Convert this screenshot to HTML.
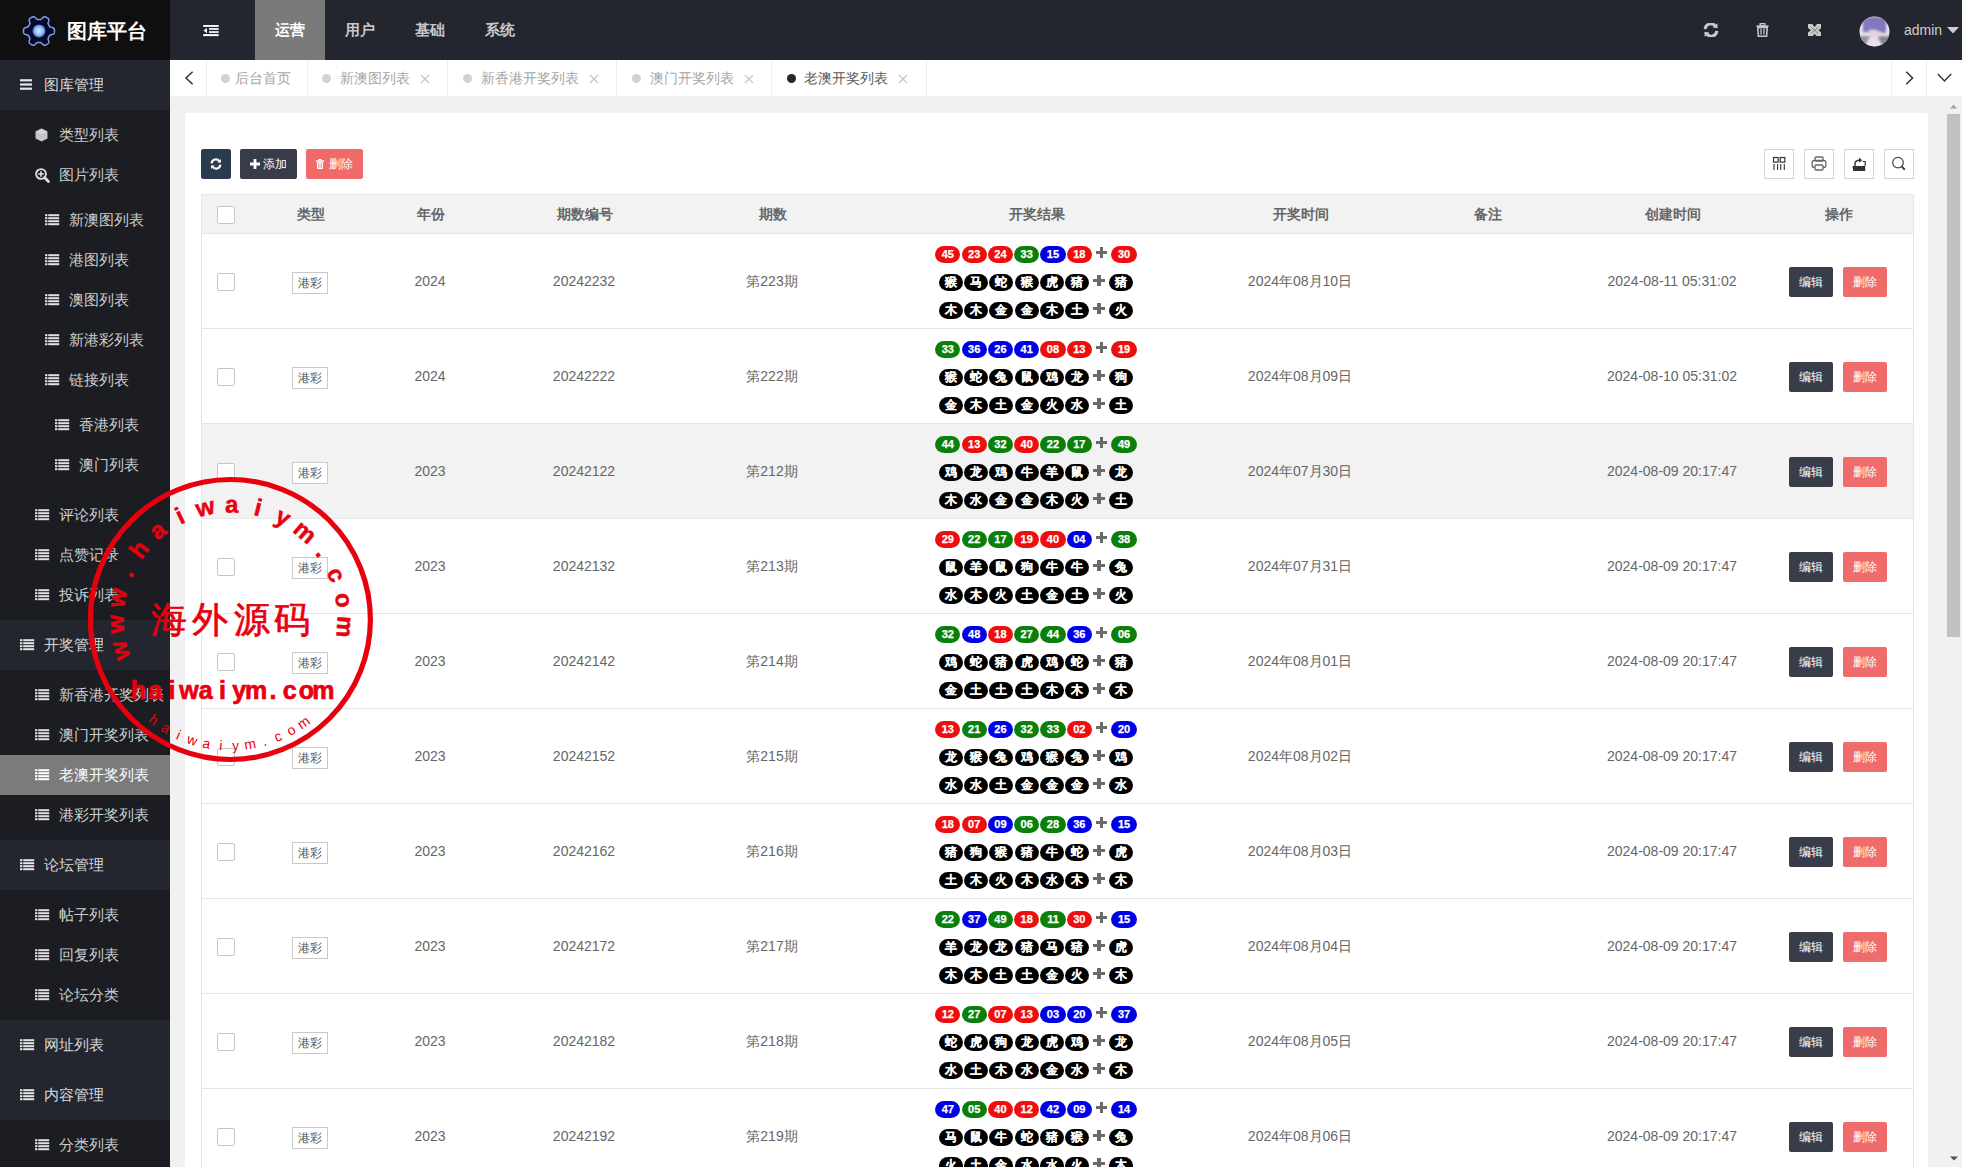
<!DOCTYPE html>
<html><head><meta charset="utf-8"><style>*{box-sizing:border-box;margin:0;padding:0}
html,body{width:1962px;height:1167px;overflow:hidden}
body{position:relative;background:#f1f1f1;font-family:"Liberation Sans",sans-serif;font-size:14px;color:#666}
.abs{position:absolute}
#top{position:absolute;left:0;top:0;width:1962px;height:60px;background:#23262e}
#logo{position:absolute;left:0;top:0;width:170px;height:60px;background:#0f0f10}
#logo .t{position:absolute;left:67px;top:19px;font-size:20px;line-height:24px;font-weight:bold;color:#fff;white-space:nowrap}
.nav{position:absolute;top:0;height:60px;width:70px;line-height:60px;text-align:center;font-size:15px;font-weight:bold;color:#c8c8c8}
.nav.on{background:#7a7a7a;color:#fff}
#admin{position:absolute;left:1904px;top:22px;font-size:14px;line-height:16px;color:#cfcfcf}
#tabs{position:absolute;left:170px;top:60px;width:1792px;height:36px;background:#fff}
.tab{position:absolute;top:0;height:36px;border-left:1px solid #f0f0f0;line-height:36px;font-size:14px;color:#999;white-space:nowrap}
.tab .dot{position:absolute;top:14px;width:8px;height:8px;border-radius:50%;background:#d2d2d2}
.tab .x{position:absolute;top:0;font-size:14px;color:#bbb}
#side{position:absolute;left:0;top:60px;width:170px;height:1107px;background:#1b1d22}
.grp{position:absolute;left:0;width:170px;height:50px;background:#23262e}
.it{position:absolute;left:0;width:170px;height:40px;line-height:40px;font-size:15px;color:#d0d0d0;white-space:nowrap}
.grp .lb{position:absolute;left:44px;top:0;line-height:50px;font-size:15px;color:#d6d6d6;white-space:nowrap}
.it.on{background:#7b7b7b;color:#fff}
.it .lb{position:absolute;top:0}
.ic{position:absolute}
#main{position:absolute;left:170px;top:96px;width:1792px;height:1071px;background:#f1f1f1;overflow:hidden}
.card{position:absolute;left:185px;top:113px;width:1743px;height:1100px;background:#fff;border-radius:2px}
.sb{position:absolute;left:1945px;top:96px;width:17px;height:1071px;background:#f1f1f1}
.sb .th{position:absolute;left:2px;top:18px;width:13px;height:523px;background:#c1c1c1}
.tb{position:absolute;top:149px;height:30px;border-radius:2px;color:#fff;font-size:12px;line-height:30px;white-space:nowrap}
.tool{position:absolute;top:149px;width:30px;height:30px;border:1px solid #d2d2d2;background:#fff}
.tool svg{position:absolute;left:0;top:0}
.thead{position:absolute;left:201px;top:194px;width:1713px;height:40px;background:#f2f2f2;border:1px solid #e6e6e6}
.th{position:absolute;top:0;width:200px;text-align:center;line-height:38px;font-weight:bold;color:#666;font-size:14px}
.cb{position:absolute;width:18px;height:18px;border:1px solid #c6c6c6;border-radius:2px;background:#fff}
.rows{position:absolute;left:0;top:0}
.row{position:absolute;left:201px;width:1713px;height:95px;background:#fff;border-bottom:1px solid #e6e6e6}
.row.hov{background:#f2f2f2}
.row .cb{top:39px}
.badge{position:absolute;top:38px;width:36px;height:22px;border:1px solid #c9c9c9;background:#fff;font-size:12px;line-height:20px;text-align:center;color:#555}
.tx{position:absolute;top:37px;width:200px;text-align:center;line-height:20px;font-size:14px;color:#666;white-space:nowrap}
.res{position:absolute;left:735px;top:0;width:200px;height:95px}
.ln{position:absolute;left:-49.5px;width:300px;display:flex;justify-content:center;align-items:flex-start;height:17px}
.l1{top:12px}.l2{top:40px}.l3{top:68px}
.bl,.bk{display:block;flex:none;height:17px;line-height:17px;border-radius:9px/8.5px;color:#fff;font-weight:bold;text-align:center;font-style:normal}
.bl{width:25.2px;margin-right:1.1px;font-size:11px;-webkit-text-stroke:0.25px #fff}
.bk{width:24px;margin-right:1.2px;background:#000;font-size:12px;-webkit-text-stroke:0.15px #fff}
.bl.r{background:#f00d0d}.bl.g{background:#0a800a}.bl.b{background:#0000e6}
.pl{display:block;flex:none;position:relative;width:18.5px;height:17px;font-size:0}.pl::before,.pl::after{content:'';position:absolute;background:#6a6a6a}.pl::before{left:3.1px;top:5.3px;width:11.4px;height:2.9px}.pl::after{left:7.1px;top:1.2px;width:3.3px;height:10.8px}
.btn{position:absolute;top:33px;width:44px;height:30px;line-height:30px;border-radius:2px;color:#fff;font-size:12px;text-align:center}
.btn.ed{left:1588px;background:#393d49}
.btn.dl{left:1642px;background:#f06b6b}
</style></head>
<body>
<div id="main"></div>
<div class="card"></div>
<div class="tb" style="left:201px;width:30px;background:#2b3c50"><svg class="abs" style="left:9px;top:9px" width="12" height="12" viewBox="0 0 16 14"><path d="M2.2 6.2 A5.6 5.6 0 0 1 12.4 3.3" fill="none" stroke="#fff" stroke-width="2.8"/><path d="M9.6 4.6 L14.6 5.2 L14.4 0.2Z" fill="#fff"/><path d="M13.8 7.8 A5.6 5.6 0 0 1 3.6 10.7" fill="none" stroke="#fff" stroke-width="2.8"/><path d="M6.4 9.4 L1.4 8.8 L1.6 13.8Z" fill="#fff"/></svg></div>
<div class="tb" style="left:240px;width:57px;background:#383c48"><svg class="abs" style="left:10px;top:10px" width="10" height="10" viewBox="0 0 10 10"><path d="M3.6 0H6.4V3.6H10V6.4H6.4V10H3.6V6.4H0V3.6H3.6Z" fill="#fff"/></svg><span class="abs" style="left:23px;top:0">添加</span></div>
<div class="tb" style="left:306px;width:57px;background:#f06a6a"><svg class="abs" style="left:10px;top:10px" width="8" height="10" viewBox="0 0 8 10"><rect x="0" y="1.2" width="8" height="1.4" fill="#fff"/><rect x="2.6" y="0" width="2.8" height="1.6" fill="#fff"/><path d="M0.8 3H7.2L6.8 10H1.2Z" fill="#fff"/><rect x="2.4" y="4" width="0.9" height="5" fill="#f06a6a"/><rect x="4.7" y="4" width="0.9" height="5" fill="#f06a6a"/></svg><span class="abs" style="left:23px;top:0">删除</span></div>
<div class="tool" style="left:1764px"><svg width="28" height="28" viewBox="0 0 28 28"><rect x="8.5" y="7.5" width="4.6" height="4.6" fill="none" stroke="#333" stroke-width="1.2"/><rect x="15.2" y="7.5" width="4.6" height="4.6" fill="none" stroke="#333" stroke-width="1.2"/><path d="M9 14V20M12.6 14V20M15.7 14V20M19.3 14V20" stroke="#333" stroke-width="1.1"/></svg></div>
<div class="tool" style="left:1804px"><svg width="28" height="28" viewBox="0 0 28 28"><rect x="10" y="7" width="8" height="4" rx="1" fill="none" stroke="#666" stroke-width="1.3"/><rect x="7.2" y="10.5" width="13.6" height="7" rx="2" fill="none" stroke="#666" stroke-width="1.3"/><rect x="10" y="15" width="8" height="5" rx="1" fill="#fff" stroke="#666" stroke-width="1.3"/></svg></div>
<div class="tool" style="left:1844px"><svg width="28" height="28" viewBox="0 0 28 28"><path d="M7.5 16H20.2V21H8.2Z" fill="#333"/><path d="M17.5 11.5H20.2V16" fill="none" stroke="#333" stroke-width="1.2"/><path d="M10 16.2V14Q10 10.2 14.6 10.2" fill="none" stroke="#333" stroke-width="1.4"/><path d="M14 7.6L17.2 10.2L14 12.8Z" fill="#333"/></svg></div>
<div class="tool" style="left:1884px"><svg width="28" height="28" viewBox="0 0 28 28"><circle cx="13" cy="12.6" r="5.3" fill="none" stroke="#444" stroke-width="1.2"/><path d="M16.6 16.4L19.8 19.8" stroke="#444" stroke-width="2"/></svg></div>
<div class="thead"><span class="cb" style="left:15px;top:11px"></span><span class="th" style="left:9px">类型</span><span class="th" style="left:129px">年份</span><span class="th" style="left:283px">期数编号</span><span class="th" style="left:471px">期数</span><span class="th" style="left:735px">开奖结果</span><span class="th" style="left:999px">开奖时间</span><span class="th" style="left:1186px">备注</span><span class="th" style="left:1371px">创建时间</span><span class="th" style="left:1537px">操作</span></div>
<div class="rows"><div class="row" style="top:234px"><span class="cb" style="left:16px"></span><span class="badge" style="left:91px">港彩</span><span class="tx" style="left:129px">2024</span><span class="tx" style="left:283px">20242232</span><span class="tx" style="left:471px">第223期</span><span class="tx" style="left:999px">2024年08月10日</span><span class="tx" style="left:1371px">2024-08-11 05:31:02</span><div class="res"><div class="ln l1"><b class="bl r">45</b><b class="bl r">23</b><b class="bl r">24</b><b class="bl g">33</b><b class="bl b">15</b><b class="bl r">18</b><i class="pl">+</i><b class="bl r">30</b></div><div class="ln l2"><b class="bk">猴</b><b class="bk">马</b><b class="bk">蛇</b><b class="bk">猴</b><b class="bk">虎</b><b class="bk">猪</b><i class="pl">+</i><b class="bk">猪</b></div><div class="ln l3"><b class="bk">木</b><b class="bk">木</b><b class="bk">金</b><b class="bk">金</b><b class="bk">木</b><b class="bk">土</b><i class="pl">+</i><b class="bk">火</b></div></div><span class="btn ed">编辑</span><span class="btn dl">删除</span></div><div class="row" style="top:329px"><span class="cb" style="left:16px"></span><span class="badge" style="left:91px">港彩</span><span class="tx" style="left:129px">2024</span><span class="tx" style="left:283px">20242222</span><span class="tx" style="left:471px">第222期</span><span class="tx" style="left:999px">2024年08月09日</span><span class="tx" style="left:1371px">2024-08-10 05:31:02</span><div class="res"><div class="ln l1"><b class="bl g">33</b><b class="bl b">36</b><b class="bl b">26</b><b class="bl b">41</b><b class="bl r">08</b><b class="bl r">13</b><i class="pl">+</i><b class="bl r">19</b></div><div class="ln l2"><b class="bk">猴</b><b class="bk">蛇</b><b class="bk">兔</b><b class="bk">鼠</b><b class="bk">鸡</b><b class="bk">龙</b><i class="pl">+</i><b class="bk">狗</b></div><div class="ln l3"><b class="bk">金</b><b class="bk">木</b><b class="bk">土</b><b class="bk">金</b><b class="bk">火</b><b class="bk">水</b><i class="pl">+</i><b class="bk">土</b></div></div><span class="btn ed">编辑</span><span class="btn dl">删除</span></div><div class="row hov" style="top:424px"><span class="cb" style="left:16px"></span><span class="badge" style="left:91px">港彩</span><span class="tx" style="left:129px">2023</span><span class="tx" style="left:283px">20242122</span><span class="tx" style="left:471px">第212期</span><span class="tx" style="left:999px">2024年07月30日</span><span class="tx" style="left:1371px">2024-08-09 20:17:47</span><div class="res"><div class="ln l1"><b class="bl g">44</b><b class="bl r">13</b><b class="bl g">32</b><b class="bl r">40</b><b class="bl g">22</b><b class="bl g">17</b><i class="pl">+</i><b class="bl g">49</b></div><div class="ln l2"><b class="bk">鸡</b><b class="bk">龙</b><b class="bk">鸡</b><b class="bk">牛</b><b class="bk">羊</b><b class="bk">鼠</b><i class="pl">+</i><b class="bk">龙</b></div><div class="ln l3"><b class="bk">木</b><b class="bk">水</b><b class="bk">金</b><b class="bk">金</b><b class="bk">木</b><b class="bk">火</b><i class="pl">+</i><b class="bk">土</b></div></div><span class="btn ed">编辑</span><span class="btn dl">删除</span></div><div class="row" style="top:519px"><span class="cb" style="left:16px"></span><span class="badge" style="left:91px">港彩</span><span class="tx" style="left:129px">2023</span><span class="tx" style="left:283px">20242132</span><span class="tx" style="left:471px">第213期</span><span class="tx" style="left:999px">2024年07月31日</span><span class="tx" style="left:1371px">2024-08-09 20:17:47</span><div class="res"><div class="ln l1"><b class="bl r">29</b><b class="bl g">22</b><b class="bl g">17</b><b class="bl r">19</b><b class="bl r">40</b><b class="bl b">04</b><i class="pl">+</i><b class="bl g">38</b></div><div class="ln l2"><b class="bk">鼠</b><b class="bk">羊</b><b class="bk">鼠</b><b class="bk">狗</b><b class="bk">牛</b><b class="bk">牛</b><i class="pl">+</i><b class="bk">兔</b></div><div class="ln l3"><b class="bk">水</b><b class="bk">木</b><b class="bk">火</b><b class="bk">土</b><b class="bk">金</b><b class="bk">土</b><i class="pl">+</i><b class="bk">火</b></div></div><span class="btn ed">编辑</span><span class="btn dl">删除</span></div><div class="row" style="top:614px"><span class="cb" style="left:16px"></span><span class="badge" style="left:91px">港彩</span><span class="tx" style="left:129px">2023</span><span class="tx" style="left:283px">20242142</span><span class="tx" style="left:471px">第214期</span><span class="tx" style="left:999px">2024年08月01日</span><span class="tx" style="left:1371px">2024-08-09 20:17:47</span><div class="res"><div class="ln l1"><b class="bl g">32</b><b class="bl b">48</b><b class="bl r">18</b><b class="bl g">27</b><b class="bl g">44</b><b class="bl b">36</b><i class="pl">+</i><b class="bl g">06</b></div><div class="ln l2"><b class="bk">鸡</b><b class="bk">蛇</b><b class="bk">猪</b><b class="bk">虎</b><b class="bk">鸡</b><b class="bk">蛇</b><i class="pl">+</i><b class="bk">猪</b></div><div class="ln l3"><b class="bk">金</b><b class="bk">土</b><b class="bk">土</b><b class="bk">土</b><b class="bk">木</b><b class="bk">木</b><i class="pl">+</i><b class="bk">木</b></div></div><span class="btn ed">编辑</span><span class="btn dl">删除</span></div><div class="row" style="top:709px"><span class="cb" style="left:16px"></span><span class="badge" style="left:91px">港彩</span><span class="tx" style="left:129px">2023</span><span class="tx" style="left:283px">20242152</span><span class="tx" style="left:471px">第215期</span><span class="tx" style="left:999px">2024年08月02日</span><span class="tx" style="left:1371px">2024-08-09 20:17:47</span><div class="res"><div class="ln l1"><b class="bl r">13</b><b class="bl g">21</b><b class="bl b">26</b><b class="bl g">32</b><b class="bl g">33</b><b class="bl r">02</b><i class="pl">+</i><b class="bl b">20</b></div><div class="ln l2"><b class="bk">龙</b><b class="bk">猴</b><b class="bk">兔</b><b class="bk">鸡</b><b class="bk">猴</b><b class="bk">兔</b><i class="pl">+</i><b class="bk">鸡</b></div><div class="ln l3"><b class="bk">水</b><b class="bk">水</b><b class="bk">土</b><b class="bk">金</b><b class="bk">金</b><b class="bk">金</b><i class="pl">+</i><b class="bk">水</b></div></div><span class="btn ed">编辑</span><span class="btn dl">删除</span></div><div class="row" style="top:804px"><span class="cb" style="left:16px"></span><span class="badge" style="left:91px">港彩</span><span class="tx" style="left:129px">2023</span><span class="tx" style="left:283px">20242162</span><span class="tx" style="left:471px">第216期</span><span class="tx" style="left:999px">2024年08月03日</span><span class="tx" style="left:1371px">2024-08-09 20:17:47</span><div class="res"><div class="ln l1"><b class="bl r">18</b><b class="bl r">07</b><b class="bl b">09</b><b class="bl g">06</b><b class="bl g">28</b><b class="bl b">36</b><i class="pl">+</i><b class="bl b">15</b></div><div class="ln l2"><b class="bk">猪</b><b class="bk">狗</b><b class="bk">猴</b><b class="bk">猪</b><b class="bk">牛</b><b class="bk">蛇</b><i class="pl">+</i><b class="bk">虎</b></div><div class="ln l3"><b class="bk">土</b><b class="bk">木</b><b class="bk">火</b><b class="bk">木</b><b class="bk">水</b><b class="bk">木</b><i class="pl">+</i><b class="bk">木</b></div></div><span class="btn ed">编辑</span><span class="btn dl">删除</span></div><div class="row" style="top:899px"><span class="cb" style="left:16px"></span><span class="badge" style="left:91px">港彩</span><span class="tx" style="left:129px">2023</span><span class="tx" style="left:283px">20242172</span><span class="tx" style="left:471px">第217期</span><span class="tx" style="left:999px">2024年08月04日</span><span class="tx" style="left:1371px">2024-08-09 20:17:47</span><div class="res"><div class="ln l1"><b class="bl g">22</b><b class="bl b">37</b><b class="bl g">49</b><b class="bl r">18</b><b class="bl g">11</b><b class="bl r">30</b><i class="pl">+</i><b class="bl b">15</b></div><div class="ln l2"><b class="bk">羊</b><b class="bk">龙</b><b class="bk">龙</b><b class="bk">猪</b><b class="bk">马</b><b class="bk">猪</b><i class="pl">+</i><b class="bk">虎</b></div><div class="ln l3"><b class="bk">木</b><b class="bk">木</b><b class="bk">土</b><b class="bk">土</b><b class="bk">金</b><b class="bk">火</b><i class="pl">+</i><b class="bk">木</b></div></div><span class="btn ed">编辑</span><span class="btn dl">删除</span></div><div class="row" style="top:994px"><span class="cb" style="left:16px"></span><span class="badge" style="left:91px">港彩</span><span class="tx" style="left:129px">2023</span><span class="tx" style="left:283px">20242182</span><span class="tx" style="left:471px">第218期</span><span class="tx" style="left:999px">2024年08月05日</span><span class="tx" style="left:1371px">2024-08-09 20:17:47</span><div class="res"><div class="ln l1"><b class="bl r">12</b><b class="bl g">27</b><b class="bl r">07</b><b class="bl r">13</b><b class="bl b">03</b><b class="bl b">20</b><i class="pl">+</i><b class="bl b">37</b></div><div class="ln l2"><b class="bk">蛇</b><b class="bk">虎</b><b class="bk">狗</b><b class="bk">龙</b><b class="bk">虎</b><b class="bk">鸡</b><i class="pl">+</i><b class="bk">龙</b></div><div class="ln l3"><b class="bk">水</b><b class="bk">土</b><b class="bk">木</b><b class="bk">水</b><b class="bk">金</b><b class="bk">水</b><i class="pl">+</i><b class="bk">木</b></div></div><span class="btn ed">编辑</span><span class="btn dl">删除</span></div><div class="row" style="top:1089px"><span class="cb" style="left:16px"></span><span class="badge" style="left:91px">港彩</span><span class="tx" style="left:129px">2023</span><span class="tx" style="left:283px">20242192</span><span class="tx" style="left:471px">第219期</span><span class="tx" style="left:999px">2024年08月06日</span><span class="tx" style="left:1371px">2024-08-09 20:17:47</span><div class="res"><div class="ln l1"><b class="bl b">47</b><b class="bl g">05</b><b class="bl r">40</b><b class="bl r">12</b><b class="bl b">42</b><b class="bl b">09</b><i class="pl">+</i><b class="bl b">14</b></div><div class="ln l2"><b class="bk">马</b><b class="bk">鼠</b><b class="bk">牛</b><b class="bk">蛇</b><b class="bk">猪</b><b class="bk">猴</b><i class="pl">+</i><b class="bk">兔</b></div><div class="ln l3"><b class="bk">火</b><b class="bk">土</b><b class="bk">金</b><b class="bk">水</b><b class="bk">水</b><b class="bk">火</b><i class="pl">+</i><b class="bk">木</b></div></div><span class="btn ed">编辑</span><span class="btn dl">删除</span></div></div>
<div class="abs" style="left:201px;top:194px;width:1px;height:980px;background:#e6e6e6"></div>
<div class="abs" style="left:1913px;top:194px;width:1px;height:980px;background:#e6e6e6"></div>
<div class="sb"><div class="th"></div><svg class="abs" style="left:5px;top:8px" width="7" height="5" viewBox="0 0 7 5"><path d="M0 4.5L3.5 0.5L7 4.5Z" fill="#a3a3a3"/></svg><svg class="abs" style="left:5px;top:1060px" width="8" height="5" viewBox="0 0 8 5"><path d="M0 0.5L4 4.5L8 0.5Z" fill="#505050"/></svg></div>
<div id="tabs"></div>
<svg class="abs" style="left:184px;top:71px" width="10" height="14" viewBox="0 0 10 14"><path d="M8.6 0.8L2 7L8.6 13.2" fill="none" stroke="#333" stroke-width="1.5"/></svg>
<div class="abs" style="left:206px;top:60px;width:1px;height:36px;background:#efefef"></div>
<div class="abs" style="left:307px;top:60px;width:1px;height:36px;background:#efefef"></div>
<div class="abs" style="left:220.5px;top:73.5px;width:9px;height:9px;border-radius:50%;background:#d2d2d2"></div>
<div class="abs tabt" style="left:235px;top:60px;line-height:36px;font-size:14px;color:#a6a6a6;white-space:nowrap">后台首页</div>
<div class="abs" style="left:447px;top:60px;width:1px;height:36px;background:#efefef"></div>
<div class="abs" style="left:321.5px;top:73.5px;width:9px;height:9px;border-radius:50%;background:#d2d2d2"></div>
<div class="abs tabt" style="left:340px;top:60px;line-height:36px;font-size:14px;color:#a6a6a6;white-space:nowrap">新澳图列表</div>
<svg class="abs" style="left:420.0px;top:74.0px" width="10" height="10" viewBox="0 0 10 10"><path d="M1 1L9 9M9 1L1 9" stroke="#c4c4c4" stroke-width="1.1"/></svg>
<div class="abs" style="left:616px;top:60px;width:1px;height:36px;background:#efefef"></div>
<div class="abs" style="left:462.5px;top:73.5px;width:9px;height:9px;border-radius:50%;background:#d2d2d2"></div>
<div class="abs tabt" style="left:481px;top:60px;line-height:36px;font-size:14px;color:#a6a6a6;white-space:nowrap">新香港开奖列表</div>
<svg class="abs" style="left:589.0px;top:74.0px" width="10" height="10" viewBox="0 0 10 10"><path d="M1 1L9 9M9 1L1 9" stroke="#c4c4c4" stroke-width="1.1"/></svg>
<div class="abs" style="left:771px;top:60px;width:1px;height:36px;background:#efefef"></div>
<div class="abs" style="left:631.5px;top:73.5px;width:9px;height:9px;border-radius:50%;background:#d2d2d2"></div>
<div class="abs tabt" style="left:650px;top:60px;line-height:36px;font-size:14px;color:#a6a6a6;white-space:nowrap">澳门开奖列表</div>
<svg class="abs" style="left:744.0px;top:74.0px" width="10" height="10" viewBox="0 0 10 10"><path d="M1 1L9 9M9 1L1 9" stroke="#c4c4c4" stroke-width="1.1"/></svg>
<div class="abs" style="left:926px;top:60px;width:1px;height:36px;background:#efefef"></div>
<div class="abs" style="left:786.5px;top:73.5px;width:9px;height:9px;border-radius:50%;background:#23262e"></div>
<div class="abs tabt" style="left:804px;top:60px;line-height:36px;font-size:14px;color:#5a5a5a;white-space:nowrap">老澳开奖列表</div>
<svg class="abs" style="left:898.0px;top:74.0px" width="10" height="10" viewBox="0 0 10 10"><path d="M1 1L9 9M9 1L1 9" stroke="#c4c4c4" stroke-width="1.1"/></svg>
<div class="abs" style="left:1891px;top:60px;width:1px;height:36px;background:#efefef"></div>
<div class="abs" style="left:1926px;top:60px;width:1px;height:36px;background:#efefef"></div>
<svg class="abs" style="left:1905px;top:71px" width="9" height="14" viewBox="0 0 9 14"><path d="M1.2 0.8L7.6 7L1.2 13.2" fill="none" stroke="#333" stroke-width="1.5"/></svg>
<svg class="abs" style="left:1937px;top:73px" width="15" height="10" viewBox="0 0 15 10"><path d="M0.8 1L7.5 8L14.2 1" fill="none" stroke="#333" stroke-width="1.5"/></svg>
<div id="side"></div>
<div class="grp" style="top:60px"></div>
<svg class="ic" style="left:20px;top:79px" width="13" height="11" viewBox="0 0 13 11"><g fill="#e6e6e6"><rect x="0" y="0.2" width="12" height="2.2"/><rect x="0" y="4.4" width="12" height="2.2"/><rect x="0" y="8.6" width="12" height="2.2"/></g></svg>
<div class="abs glb" style="left:44px;top:60px;line-height:50px;font-size:15px;color:#d8d8d8;white-space:nowrap">图库管理</div>
<svg class="ic" style="left:35px;top:128px" width="14" height="14" viewBox="0 0 14 14"><path d="M6.5 0.5L12.5 3.6V10.4L6.5 13.5L0.5 10.4V3.6Z" fill="#c9c3c9"/><path d="M6.5 0.5L12.5 3.6L6.5 6.8L0.5 3.6Z" fill="#e8e0e8" opacity="0.5"/></svg>
<div class="abs ilb" style="left:59px;top:115px;line-height:40px;font-size:15px;color:#cdcdcd;white-space:nowrap">类型列表</div>
<svg class="ic" style="left:35px;top:168px" width="15" height="15" viewBox="0 0 15 15"><g stroke="#e0e0e0" fill="none"><circle cx="6" cy="6" r="4.9" stroke-width="1.9"/><path d="M9.6 9.6L13.4 13.4" stroke-width="2.8" stroke-linecap="round"/><path d="M3.2 6H8.8M6 3.2V8.8" stroke-width="1.7"/></g></svg>
<div class="abs ilb" style="left:59px;top:155px;line-height:40px;font-size:15px;color:#cdcdcd;white-space:nowrap">图片列表</div>
<svg class="ic" style="left:45px;top:214px" width="15" height="12" viewBox="0 0 15 12"><g fill="#e0e0e0"><rect x="0" y="0.2" width="2.4" height="2"/><rect x="3.2" y="0.2" width="11" height="2"/><rect x="0" y="3.2" width="2.4" height="2"/><rect x="3.2" y="3.2" width="11" height="2"/><rect x="0" y="6.2" width="2.4" height="2"/><rect x="3.2" y="6.2" width="11" height="2"/><rect x="0" y="9.2" width="2.4" height="2"/><rect x="3.2" y="9.2" width="11" height="2"/></g></svg>
<div class="abs ilb" style="left:69px;top:200px;line-height:40px;font-size:15px;color:#cdcdcd;white-space:nowrap">新澳图列表</div>
<svg class="ic" style="left:45px;top:254px" width="15" height="12" viewBox="0 0 15 12"><g fill="#e0e0e0"><rect x="0" y="0.2" width="2.4" height="2"/><rect x="3.2" y="0.2" width="11" height="2"/><rect x="0" y="3.2" width="2.4" height="2"/><rect x="3.2" y="3.2" width="11" height="2"/><rect x="0" y="6.2" width="2.4" height="2"/><rect x="3.2" y="6.2" width="11" height="2"/><rect x="0" y="9.2" width="2.4" height="2"/><rect x="3.2" y="9.2" width="11" height="2"/></g></svg>
<div class="abs ilb" style="left:69px;top:240px;line-height:40px;font-size:15px;color:#cdcdcd;white-space:nowrap">港图列表</div>
<svg class="ic" style="left:45px;top:294px" width="15" height="12" viewBox="0 0 15 12"><g fill="#e0e0e0"><rect x="0" y="0.2" width="2.4" height="2"/><rect x="3.2" y="0.2" width="11" height="2"/><rect x="0" y="3.2" width="2.4" height="2"/><rect x="3.2" y="3.2" width="11" height="2"/><rect x="0" y="6.2" width="2.4" height="2"/><rect x="3.2" y="6.2" width="11" height="2"/><rect x="0" y="9.2" width="2.4" height="2"/><rect x="3.2" y="9.2" width="11" height="2"/></g></svg>
<div class="abs ilb" style="left:69px;top:280px;line-height:40px;font-size:15px;color:#cdcdcd;white-space:nowrap">澳图列表</div>
<svg class="ic" style="left:45px;top:334px" width="15" height="12" viewBox="0 0 15 12"><g fill="#e0e0e0"><rect x="0" y="0.2" width="2.4" height="2"/><rect x="3.2" y="0.2" width="11" height="2"/><rect x="0" y="3.2" width="2.4" height="2"/><rect x="3.2" y="3.2" width="11" height="2"/><rect x="0" y="6.2" width="2.4" height="2"/><rect x="3.2" y="6.2" width="11" height="2"/><rect x="0" y="9.2" width="2.4" height="2"/><rect x="3.2" y="9.2" width="11" height="2"/></g></svg>
<div class="abs ilb" style="left:69px;top:320px;line-height:40px;font-size:15px;color:#cdcdcd;white-space:nowrap">新港彩列表</div>
<svg class="ic" style="left:45px;top:374px" width="15" height="12" viewBox="0 0 15 12"><g fill="#e0e0e0"><rect x="0" y="0.2" width="2.4" height="2"/><rect x="3.2" y="0.2" width="11" height="2"/><rect x="0" y="3.2" width="2.4" height="2"/><rect x="3.2" y="3.2" width="11" height="2"/><rect x="0" y="6.2" width="2.4" height="2"/><rect x="3.2" y="6.2" width="11" height="2"/><rect x="0" y="9.2" width="2.4" height="2"/><rect x="3.2" y="9.2" width="11" height="2"/></g></svg>
<div class="abs ilb" style="left:69px;top:360px;line-height:40px;font-size:15px;color:#cdcdcd;white-space:nowrap">链接列表</div>
<svg class="ic" style="left:55px;top:419px" width="15" height="12" viewBox="0 0 15 12"><g fill="#e0e0e0"><rect x="0" y="0.2" width="2.4" height="2"/><rect x="3.2" y="0.2" width="11" height="2"/><rect x="0" y="3.2" width="2.4" height="2"/><rect x="3.2" y="3.2" width="11" height="2"/><rect x="0" y="6.2" width="2.4" height="2"/><rect x="3.2" y="6.2" width="11" height="2"/><rect x="0" y="9.2" width="2.4" height="2"/><rect x="3.2" y="9.2" width="11" height="2"/></g></svg>
<div class="abs ilb" style="left:79px;top:405px;line-height:40px;font-size:15px;color:#cdcdcd;white-space:nowrap">香港列表</div>
<svg class="ic" style="left:55px;top:459px" width="15" height="12" viewBox="0 0 15 12"><g fill="#e0e0e0"><rect x="0" y="0.2" width="2.4" height="2"/><rect x="3.2" y="0.2" width="11" height="2"/><rect x="0" y="3.2" width="2.4" height="2"/><rect x="3.2" y="3.2" width="11" height="2"/><rect x="0" y="6.2" width="2.4" height="2"/><rect x="3.2" y="6.2" width="11" height="2"/><rect x="0" y="9.2" width="2.4" height="2"/><rect x="3.2" y="9.2" width="11" height="2"/></g></svg>
<div class="abs ilb" style="left:79px;top:445px;line-height:40px;font-size:15px;color:#cdcdcd;white-space:nowrap">澳门列表</div>
<svg class="ic" style="left:35px;top:509px" width="15" height="12" viewBox="0 0 15 12"><g fill="#e0e0e0"><rect x="0" y="0.2" width="2.4" height="2"/><rect x="3.2" y="0.2" width="11" height="2"/><rect x="0" y="3.2" width="2.4" height="2"/><rect x="3.2" y="3.2" width="11" height="2"/><rect x="0" y="6.2" width="2.4" height="2"/><rect x="3.2" y="6.2" width="11" height="2"/><rect x="0" y="9.2" width="2.4" height="2"/><rect x="3.2" y="9.2" width="11" height="2"/></g></svg>
<div class="abs ilb" style="left:59px;top:495px;line-height:40px;font-size:15px;color:#cdcdcd;white-space:nowrap">评论列表</div>
<svg class="ic" style="left:35px;top:549px" width="15" height="12" viewBox="0 0 15 12"><g fill="#e0e0e0"><rect x="0" y="0.2" width="2.4" height="2"/><rect x="3.2" y="0.2" width="11" height="2"/><rect x="0" y="3.2" width="2.4" height="2"/><rect x="3.2" y="3.2" width="11" height="2"/><rect x="0" y="6.2" width="2.4" height="2"/><rect x="3.2" y="6.2" width="11" height="2"/><rect x="0" y="9.2" width="2.4" height="2"/><rect x="3.2" y="9.2" width="11" height="2"/></g></svg>
<div class="abs ilb" style="left:59px;top:535px;line-height:40px;font-size:15px;color:#cdcdcd;white-space:nowrap">点赞记录</div>
<svg class="ic" style="left:35px;top:589px" width="15" height="12" viewBox="0 0 15 12"><g fill="#e0e0e0"><rect x="0" y="0.2" width="2.4" height="2"/><rect x="3.2" y="0.2" width="11" height="2"/><rect x="0" y="3.2" width="2.4" height="2"/><rect x="3.2" y="3.2" width="11" height="2"/><rect x="0" y="6.2" width="2.4" height="2"/><rect x="3.2" y="6.2" width="11" height="2"/><rect x="0" y="9.2" width="2.4" height="2"/><rect x="3.2" y="9.2" width="11" height="2"/></g></svg>
<div class="abs ilb" style="left:59px;top:575px;line-height:40px;font-size:15px;color:#cdcdcd;white-space:nowrap">投诉列表</div>
<div class="grp" style="top:620px"></div>
<svg class="ic" style="left:20px;top:639px" width="15" height="12" viewBox="0 0 15 12"><g fill="#e6e6e6"><rect x="0" y="0.2" width="2.4" height="2"/><rect x="3.2" y="0.2" width="11" height="2"/><rect x="0" y="3.2" width="2.4" height="2"/><rect x="3.2" y="3.2" width="11" height="2"/><rect x="0" y="6.2" width="2.4" height="2"/><rect x="3.2" y="6.2" width="11" height="2"/><rect x="0" y="9.2" width="2.4" height="2"/><rect x="3.2" y="9.2" width="11" height="2"/></g></svg>
<div class="abs glb" style="left:44px;top:620px;line-height:50px;font-size:15px;color:#d8d8d8;white-space:nowrap">开奖管理</div>
<svg class="ic" style="left:35px;top:689px" width="15" height="12" viewBox="0 0 15 12"><g fill="#e0e0e0"><rect x="0" y="0.2" width="2.4" height="2"/><rect x="3.2" y="0.2" width="11" height="2"/><rect x="0" y="3.2" width="2.4" height="2"/><rect x="3.2" y="3.2" width="11" height="2"/><rect x="0" y="6.2" width="2.4" height="2"/><rect x="3.2" y="6.2" width="11" height="2"/><rect x="0" y="9.2" width="2.4" height="2"/><rect x="3.2" y="9.2" width="11" height="2"/></g></svg>
<div class="abs ilb" style="left:59px;top:675px;line-height:40px;font-size:15px;color:#cdcdcd;white-space:nowrap">新香港开奖列表</div>
<svg class="ic" style="left:35px;top:729px" width="15" height="12" viewBox="0 0 15 12"><g fill="#e0e0e0"><rect x="0" y="0.2" width="2.4" height="2"/><rect x="3.2" y="0.2" width="11" height="2"/><rect x="0" y="3.2" width="2.4" height="2"/><rect x="3.2" y="3.2" width="11" height="2"/><rect x="0" y="6.2" width="2.4" height="2"/><rect x="3.2" y="6.2" width="11" height="2"/><rect x="0" y="9.2" width="2.4" height="2"/><rect x="3.2" y="9.2" width="11" height="2"/></g></svg>
<div class="abs ilb" style="left:59px;top:715px;line-height:40px;font-size:15px;color:#cdcdcd;white-space:nowrap">澳门开奖列表</div>
<div class="abs" style="left:0;top:755px;width:170px;height:40px;background:#7b7b7b"></div>
<svg class="ic" style="left:35px;top:769px" width="15" height="12" viewBox="0 0 15 12"><g fill="#ffffff"><rect x="0" y="0.2" width="2.4" height="2"/><rect x="3.2" y="0.2" width="11" height="2"/><rect x="0" y="3.2" width="2.4" height="2"/><rect x="3.2" y="3.2" width="11" height="2"/><rect x="0" y="6.2" width="2.4" height="2"/><rect x="3.2" y="6.2" width="11" height="2"/><rect x="0" y="9.2" width="2.4" height="2"/><rect x="3.2" y="9.2" width="11" height="2"/></g></svg>
<div class="abs ilb" style="left:59px;top:755px;line-height:40px;font-size:15px;color:#fff;white-space:nowrap">老澳开奖列表</div>
<svg class="ic" style="left:35px;top:809px" width="15" height="12" viewBox="0 0 15 12"><g fill="#e0e0e0"><rect x="0" y="0.2" width="2.4" height="2"/><rect x="3.2" y="0.2" width="11" height="2"/><rect x="0" y="3.2" width="2.4" height="2"/><rect x="3.2" y="3.2" width="11" height="2"/><rect x="0" y="6.2" width="2.4" height="2"/><rect x="3.2" y="6.2" width="11" height="2"/><rect x="0" y="9.2" width="2.4" height="2"/><rect x="3.2" y="9.2" width="11" height="2"/></g></svg>
<div class="abs ilb" style="left:59px;top:795px;line-height:40px;font-size:15px;color:#cdcdcd;white-space:nowrap">港彩开奖列表</div>
<div class="grp" style="top:840px"></div>
<svg class="ic" style="left:20px;top:859px" width="15" height="12" viewBox="0 0 15 12"><g fill="#e6e6e6"><rect x="0" y="0.2" width="2.4" height="2"/><rect x="3.2" y="0.2" width="11" height="2"/><rect x="0" y="3.2" width="2.4" height="2"/><rect x="3.2" y="3.2" width="11" height="2"/><rect x="0" y="6.2" width="2.4" height="2"/><rect x="3.2" y="6.2" width="11" height="2"/><rect x="0" y="9.2" width="2.4" height="2"/><rect x="3.2" y="9.2" width="11" height="2"/></g></svg>
<div class="abs glb" style="left:44px;top:840px;line-height:50px;font-size:15px;color:#d8d8d8;white-space:nowrap">论坛管理</div>
<svg class="ic" style="left:35px;top:909px" width="15" height="12" viewBox="0 0 15 12"><g fill="#e0e0e0"><rect x="0" y="0.2" width="2.4" height="2"/><rect x="3.2" y="0.2" width="11" height="2"/><rect x="0" y="3.2" width="2.4" height="2"/><rect x="3.2" y="3.2" width="11" height="2"/><rect x="0" y="6.2" width="2.4" height="2"/><rect x="3.2" y="6.2" width="11" height="2"/><rect x="0" y="9.2" width="2.4" height="2"/><rect x="3.2" y="9.2" width="11" height="2"/></g></svg>
<div class="abs ilb" style="left:59px;top:895px;line-height:40px;font-size:15px;color:#cdcdcd;white-space:nowrap">帖子列表</div>
<svg class="ic" style="left:35px;top:949px" width="15" height="12" viewBox="0 0 15 12"><g fill="#e0e0e0"><rect x="0" y="0.2" width="2.4" height="2"/><rect x="3.2" y="0.2" width="11" height="2"/><rect x="0" y="3.2" width="2.4" height="2"/><rect x="3.2" y="3.2" width="11" height="2"/><rect x="0" y="6.2" width="2.4" height="2"/><rect x="3.2" y="6.2" width="11" height="2"/><rect x="0" y="9.2" width="2.4" height="2"/><rect x="3.2" y="9.2" width="11" height="2"/></g></svg>
<div class="abs ilb" style="left:59px;top:935px;line-height:40px;font-size:15px;color:#cdcdcd;white-space:nowrap">回复列表</div>
<svg class="ic" style="left:35px;top:989px" width="15" height="12" viewBox="0 0 15 12"><g fill="#e0e0e0"><rect x="0" y="0.2" width="2.4" height="2"/><rect x="3.2" y="0.2" width="11" height="2"/><rect x="0" y="3.2" width="2.4" height="2"/><rect x="3.2" y="3.2" width="11" height="2"/><rect x="0" y="6.2" width="2.4" height="2"/><rect x="3.2" y="6.2" width="11" height="2"/><rect x="0" y="9.2" width="2.4" height="2"/><rect x="3.2" y="9.2" width="11" height="2"/></g></svg>
<div class="abs ilb" style="left:59px;top:975px;line-height:40px;font-size:15px;color:#cdcdcd;white-space:nowrap">论坛分类</div>
<div class="grp" style="top:1020px"></div>
<svg class="ic" style="left:20px;top:1039px" width="15" height="12" viewBox="0 0 15 12"><g fill="#e6e6e6"><rect x="0" y="0.2" width="2.4" height="2"/><rect x="3.2" y="0.2" width="11" height="2"/><rect x="0" y="3.2" width="2.4" height="2"/><rect x="3.2" y="3.2" width="11" height="2"/><rect x="0" y="6.2" width="2.4" height="2"/><rect x="3.2" y="6.2" width="11" height="2"/><rect x="0" y="9.2" width="2.4" height="2"/><rect x="3.2" y="9.2" width="11" height="2"/></g></svg>
<div class="abs glb" style="left:44px;top:1020px;line-height:50px;font-size:15px;color:#d8d8d8;white-space:nowrap">网址列表</div>
<div class="grp" style="top:1070px"></div>
<svg class="ic" style="left:20px;top:1089px" width="15" height="12" viewBox="0 0 15 12"><g fill="#e6e6e6"><rect x="0" y="0.2" width="2.4" height="2"/><rect x="3.2" y="0.2" width="11" height="2"/><rect x="0" y="3.2" width="2.4" height="2"/><rect x="3.2" y="3.2" width="11" height="2"/><rect x="0" y="6.2" width="2.4" height="2"/><rect x="3.2" y="6.2" width="11" height="2"/><rect x="0" y="9.2" width="2.4" height="2"/><rect x="3.2" y="9.2" width="11" height="2"/></g></svg>
<div class="abs glb" style="left:44px;top:1070px;line-height:50px;font-size:15px;color:#d8d8d8;white-space:nowrap">内容管理</div>
<svg class="ic" style="left:35px;top:1139px" width="15" height="12" viewBox="0 0 15 12"><g fill="#e0e0e0"><rect x="0" y="0.2" width="2.4" height="2"/><rect x="3.2" y="0.2" width="11" height="2"/><rect x="0" y="3.2" width="2.4" height="2"/><rect x="3.2" y="3.2" width="11" height="2"/><rect x="0" y="6.2" width="2.4" height="2"/><rect x="3.2" y="6.2" width="11" height="2"/><rect x="0" y="9.2" width="2.4" height="2"/><rect x="3.2" y="9.2" width="11" height="2"/></g></svg>
<div class="abs ilb" style="left:59px;top:1125px;line-height:40px;font-size:15px;color:#cdcdcd;white-space:nowrap">分类列表</div>
<div id="top">
<div id="logo">
<svg class="abs" style="left:20px;top:13px" width="38" height="38" viewBox="0 0 38 38">
<defs><radialGradient id="gl" cx="50%" cy="50%" r="50%"><stop offset="0" stop-color="#d8e8ff"/><stop offset="0.6" stop-color="#9cc0f5"/><stop offset="1" stop-color="#3c6fd0"/></radialGradient></defs>
<path d="M34.50 18.00 L34.49 18.41 L34.47 18.81 L34.42 19.21 L34.35 19.61 L34.24 20.01 L34.07 20.39 L33.81 20.74 L33.39 21.06 L32.79 21.31 L32.04 21.49 L31.29 21.64 L30.69 21.80 L30.26 21.99 L29.96 22.21 L29.74 22.45 L29.56 22.70 L29.41 22.96 L29.26 23.23 L29.11 23.49 L28.96 23.75 L28.81 24.01 L28.65 24.27 L28.50 24.53 L28.36 24.80 L28.22 25.08 L28.12 25.39 L28.08 25.75 L28.13 26.22 L28.30 26.83 L28.55 27.55 L28.76 28.28 L28.84 28.93 L28.78 29.45 L28.61 29.86 L28.36 30.20 L28.07 30.49 L27.76 30.75 L27.44 30.99 L27.10 31.21 L26.75 31.42 L26.39 31.62 L26.03 31.80 L25.66 31.96 L25.28 32.10 L24.88 32.20 L24.47 32.25 L24.03 32.20 L23.55 31.99 L23.03 31.59 L22.49 31.04 L21.99 30.47 L21.55 30.02 L21.18 29.74 L20.84 29.59 L20.52 29.53 L20.21 29.50 L19.90 29.49 L19.60 29.50 L19.30 29.50 L19.00 29.50 L18.70 29.50 L18.40 29.50 L18.10 29.49 L17.79 29.50 L17.48 29.53 L17.16 29.59 L16.82 29.74 L16.45 30.02 L16.01 30.47 L15.51 31.04 L14.97 31.59 L14.45 31.99 L13.97 32.20 L13.53 32.25 L13.12 32.20 L12.72 32.10 L12.34 31.96 L11.97 31.80 L11.61 31.62 L11.25 31.42 L10.90 31.21 L10.56 30.99 L10.24 30.75 L9.93 30.49 L9.64 30.20 L9.39 29.86 L9.22 29.45 L9.16 28.93 L9.24 28.28 L9.45 27.55 L9.70 26.83 L9.87 26.22 L9.92 25.75 L9.88 25.39 L9.78 25.08 L9.64 24.80 L9.50 24.53 L9.35 24.27 L9.19 24.01 L9.04 23.75 L8.89 23.49 L8.74 23.23 L8.59 22.96 L8.44 22.70 L8.26 22.45 L8.04 22.21 L7.74 21.99 L7.31 21.80 L6.71 21.64 L5.96 21.49 L5.21 21.31 L4.61 21.06 L4.19 20.74 L3.93 20.39 L3.76 20.01 L3.65 19.61 L3.58 19.21 L3.53 18.81 L3.51 18.41 L3.50 18.00 L3.51 17.59 L3.53 17.19 L3.58 16.79 L3.65 16.39 L3.76 15.99 L3.93 15.61 L4.19 15.26 L4.61 14.94 L5.21 14.69 L5.96 14.51 L6.71 14.36 L7.31 14.20 L7.74 14.01 L8.04 13.79 L8.26 13.55 L8.44 13.30 L8.59 13.04 L8.74 12.77 L8.89 12.51 L9.04 12.25 L9.19 11.99 L9.35 11.73 L9.50 11.47 L9.64 11.20 L9.78 10.92 L9.88 10.61 L9.92 10.25 L9.87 9.78 L9.70 9.17 L9.45 8.45 L9.24 7.72 L9.16 7.07 L9.22 6.55 L9.39 6.14 L9.64 5.80 L9.93 5.51 L10.24 5.25 L10.56 5.01 L10.90 4.79 L11.25 4.58 L11.61 4.38 L11.97 4.20 L12.34 4.04 L12.72 3.90 L13.12 3.80 L13.53 3.75 L13.97 3.80 L14.45 4.01 L14.97 4.41 L15.51 4.96 L16.01 5.53 L16.45 5.98 L16.82 6.26 L17.16 6.41 L17.48 6.47 L17.79 6.50 L18.10 6.51 L18.40 6.50 L18.70 6.50 L19.00 6.50 L19.30 6.50 L19.60 6.50 L19.90 6.51 L20.21 6.50 L20.52 6.47 L20.84 6.41 L21.18 6.26 L21.55 5.98 L21.99 5.53 L22.49 4.96 L23.03 4.41 L23.55 4.01 L24.03 3.80 L24.47 3.75 L24.88 3.80 L25.28 3.90 L25.66 4.04 L26.03 4.20 L26.39 4.38 L26.75 4.58 L27.10 4.79 L27.44 5.01 L27.76 5.25 L28.07 5.51 L28.36 5.80 L28.61 6.14 L28.78 6.55 L28.84 7.07 L28.76 7.72 L28.55 8.45 L28.30 9.17 L28.13 9.78 L28.08 10.25 L28.12 10.61 L28.22 10.92 L28.36 11.20 L28.50 11.47 L28.65 11.73 L28.81 11.99 L28.96 12.25 L29.11 12.51 L29.26 12.77 L29.41 13.04 L29.56 13.30 L29.74 13.55 L29.96 13.79 L30.26 14.01 L30.69 14.20 L31.29 14.36 L32.04 14.51 L32.79 14.69 L33.39 14.94 L33.81 15.26 L34.07 15.61 L34.24 15.99 L34.35 16.39 L34.42 16.79 L34.47 17.19 L34.49 17.59 L34.50 18.00Z" fill="#050a2a" stroke="#7d9ee6" stroke-width="1.5" stroke-linejoin="round"/>
<circle cx="19" cy="17.9" r="6.5" fill="url(#gl)"/>
</svg>
<div class="t">图库平台</div>
</div>
<svg class="abs" style="left:203px;top:24px" width="17" height="13" viewBox="0 0 17 13"><g fill="#fff"><rect x="0.2" y="1" width="15.5" height="1.9"/><rect x="6" y="4.1" width="9.7" height="1.7"/><rect x="6" y="7.2" width="9.7" height="1.7"/><rect x="0.2" y="10.1" width="15.5" height="2"/><path d="M0.5 6.5L4 3.9V9.2Z"/></g></svg>
<div class="nav on" style="left:255px">运营</div>
<div class="nav" style="left:325px">用户</div>
<div class="nav" style="left:395px">基础</div>
<div class="nav" style="left:465px">系统</div>
<svg class="abs" style="left:1703px;top:23px" width="16" height="14" viewBox="0 0 16 14"><path d="M2.2 6.2 A5.6 5.6 0 0 1 12.4 3.3" fill="none" stroke="#c8c8c8" stroke-width="3"/><path d="M9.6 4.6 L14.6 5.2 L14.4 0.2Z" fill="#c8c8c8"/><path d="M13.8 7.8 A5.6 5.6 0 0 1 3.6 10.7" fill="none" stroke="#c8c8c8" stroke-width="3"/><path d="M6.4 9.4 L1.4 8.8 L1.6 13.8Z" fill="#c8c8c8"/></svg>
<svg class="abs" style="left:1756px;top:23px" width="13" height="14" viewBox="0 0 13 14"><rect x="0.5" y="2.4" width="12" height="1.6" fill="#c8c8c8"/><rect x="4.2" y="0.6" width="4.6" height="2.2" fill="none" stroke="#c8c8c8" stroke-width="1.4"/><path d="M1.8 4.4 H11.2 L10.6 13.2 H2.4Z" fill="none" stroke="#c8c8c8" stroke-width="1.6"/><rect x="4.4" y="5.6" width="1.3" height="6" fill="#c8c8c8"/><rect x="7.3" y="5.6" width="1.3" height="6" fill="#c8c8c8"/></svg>
<svg class="abs" style="left:1807.5px;top:23.7px" width="13.3" height="12.6" viewBox="0 0 13.3 12.6"><path d="M0 0H4.3L6.65 2.9L9 0H13.3V4L10.4 6.3L13.3 8.6V12.6H9L6.65 9.7L4.3 12.6H0V8.6L2.9 6.3L0 4Z" fill="#c8c8c8"/><path d="M3.2 3.2L10.1 9.4M10.1 3.2L3.2 9.4" stroke="#23262e" stroke-width="0.7" opacity="0.6"/></svg>
<svg class="abs" style="left:1859.3px;top:15.5px" width="31" height="31" viewBox="0 0 31 31">
<defs><clipPath id="av"><circle cx="15.5" cy="15.5" r="15"/></clipPath><filter id="bl"><feGaussianBlur stdDeviation="0.9"/></filter></defs>
<g clip-path="url(#av)"><rect width="31" height="31" fill="#e6e2ec"/><g filter="url(#bl)">
<rect x="0" y="20" width="31" height="11" fill="#9a929e"/>
<path d="M4 3 Q15.5 -2 27 3 L27 16 Q24 19 22 15 Q20 19 18 14 Q15 18 12 14 Q10 19 8 15 Q6 18 4 15Z" fill="#8577bf"/>
<path d="M10 14 Q15 13 20 15 L19 22 Q15 25 11 22Z" fill="#e3d3e3"/>
<path d="M11 21 Q16 24 19 21 L25 31 H5Z" fill="#e9e2ee"/>
<path d="M19 22 L31 20 V31 H24Z" fill="#8b8490"/>
</g></g></svg>
<div id="admin">admin</div>
<svg class="abs" style="left:1947px;top:27px" width="12" height="7" viewBox="0 0 12 7"><path d="M0 0H12L6 6.5Z" fill="#cfcfcf"/></svg>
</div>

<svg class="abs" style="left:0;top:0;pointer-events:none" width="1962" height="1167" viewBox="0 0 1962 1167">
<circle cx="230.4" cy="619.5" r="140" fill="none" stroke="#e8000e" stroke-width="5.2"/>
<g fill="#e8000e" stroke="#e8000e" stroke-width="0.5" font-family="Liberation Sans" font-weight="bold" font-size="24" text-anchor="middle">
<text transform="translate(230.4 619.5) rotate(254.30) translate(0 -107)">w</text>
<text transform="translate(230.4 619.5) rotate(267.59) translate(0 -107)">w</text>
<text transform="translate(230.4 619.5) rotate(280.88) translate(0 -107)">w</text>
<text transform="translate(230.4 619.5) rotate(294.17) translate(0 -107)">.</text>
<text transform="translate(230.4 619.5) rotate(307.46) translate(0 -107)">h</text>
<text transform="translate(230.4 619.5) rotate(320.75) translate(0 -107)">a</text>
<text transform="translate(230.4 619.5) rotate(334.04) translate(0 -107)">i</text>
<text transform="translate(230.4 619.5) rotate(347.33) translate(0 -107)">w</text>
<text transform="translate(230.4 619.5) rotate(360.62) translate(0 -107)">a</text>
<text transform="translate(230.4 619.5) rotate(373.91) translate(0 -107)">i</text>
<text transform="translate(230.4 619.5) rotate(387.20) translate(0 -107)">y</text>
<text transform="translate(230.4 619.5) rotate(400.49) translate(0 -107)">m</text>
<text transform="translate(230.4 619.5) rotate(413.78) translate(0 -107)">.</text>
<text transform="translate(230.4 619.5) rotate(427.07) translate(0 -107)">c</text>
<text transform="translate(230.4 619.5) rotate(440.36) translate(0 -107)">o</text>
<text transform="translate(230.4 619.5) rotate(453.65) translate(0 -107)">m</text>
</g>
<g fill="#e8000e" font-family="Liberation Sans" font-size="14" text-anchor="middle">
<text transform="translate(230.4 619.5) rotate(37.40) translate(0 131)">h</text>
<text transform="translate(230.4 619.5) rotate(30.78) translate(0 131)">a</text>
<text transform="translate(230.4 619.5) rotate(24.16) translate(0 131)">i</text>
<text transform="translate(230.4 619.5) rotate(17.54) translate(0 131)">w</text>
<text transform="translate(230.4 619.5) rotate(10.92) translate(0 131)">a</text>
<text transform="translate(230.4 619.5) rotate(4.30) translate(0 131)">i</text>
<text transform="translate(230.4 619.5) rotate(-2.32) translate(0 131)">y</text>
<text transform="translate(230.4 619.5) rotate(-8.94) translate(0 131)">m</text>
<text transform="translate(230.4 619.5) rotate(-15.56) translate(0 131)">.</text>
<text transform="translate(230.4 619.5) rotate(-22.18) translate(0 131)">c</text>
<text transform="translate(230.4 619.5) rotate(-28.80) translate(0 131)">o</text>
<text transform="translate(230.4 619.5) rotate(-35.42) translate(0 131)">m</text>
</g>
<text x="138.5 155.3 172.1 188.9 205.7 222.5 239.3 256.1 272.9 289.7 306.5 323.3" y="698.7" fill="#e8000e" stroke="#e8000e" stroke-width="0.7" font-family="Liberation Sans" font-weight="bold" font-size="25" text-anchor="middle">haiwaiym.com</text>
<text x="169 210 252 292" y="632" fill="#e8000e" font-family="Liberation Serif" font-size="36" stroke="#e8000e" stroke-width="0.7" text-anchor="middle">海外源码</text>
</svg>
</body></html>
